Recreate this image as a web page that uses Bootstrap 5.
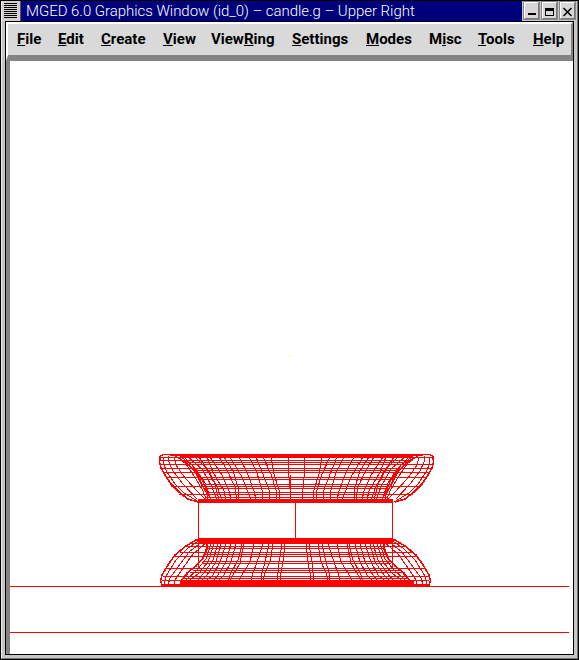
<!DOCTYPE html>
<html lang="en">
<head>
<meta charset="utf-8">
<title>MGED 6.0 Graphics Window</title>
<link href="https://cdn.jsdelivr.net/npm/bootstrap@5.3.0/dist/css/bootstrap.min.css" rel="stylesheet">
<style>
body{width:579px;height:660px;overflow:hidden;background:#000;font-family:Roboto,"Liberation Sans",sans-serif}
.mged{width:579px;height:660px;padding:1px;background:#000}
.frame{background:#c9c5c5;border-left:1px solid #eee;border-right:1px solid #777;border-bottom:1px solid #777;padding:0 3px 3px 3px}
.titlebar{height:20px;margin:0 -3px 0 -3px;background:#00007c}
.sysmenu{width:19px;height:20px;background:#d4d0d0;border-right:1px solid #555}
.caption-text{color:#fff;font-weight:300;font-size:15px;letter-spacing:-.04px;line-height:20px;height:20px;padding-left:5px;white-space:pre}
.winbtns{background:#c9c5c5;gap:3px;padding:1px 1px 0 2px;width:55px}
.winbtn{width:15px;height:17px;background:#d9d6d6;border:1px solid;border-color:#fff #777 #777 #fff;outline:1px solid #888}
.client{border:1px solid #000;background:#fff}
.menubar{height:39px;background:#d9d9d9;border:2px solid;border-color:#fff #838383 #838383 #fff;border-bottom-width:6px;padding-left:9px;color:#000;font-weight:700;font-size:15px;line-height:31px}
.menubar a{color:#000;text-decoration:none;white-space:nowrap;flex:none}
.menubar u{text-decoration:underline;text-decoration-thickness:1px;text-underline-offset:1px;text-decoration-skip-ink:none}
.drawing{border-left:4px solid #838383}
.wire{fill:none;stroke:#f00;stroke-width:1}
</style>
<script src="https://cdn.jsdelivr.net/npm/bootstrap@5.3.0/dist/js/bootstrap.bundle.min.js"></script>
</head>
<body class="m-0">
<div class="mged">
<div class="frame d-flex flex-column h-100">
  <header class="titlebar d-flex flex-shrink-0">
    <div class="sysmenu flex-shrink-0"><svg class="d-block" width="18" height="20" shape-rendering="crispEdges"><path d="M2 2.5h13M2 4.5h13M2 6.5h13M2 8.5h13M2 10.5h13M2 12.5h13M2 14.5h13M2 16.5h13" stroke="#000"/></svg></div>
    <div class="caption-text flex-grow-1">MGED 6.0 Graphics Window (id_0) – candle.g – Upper Right</div>
    <div class="winbtns d-flex flex-shrink-0">
      <div class="winbtn"><svg class="d-block" width="13" height="15" shape-rendering="crispEdges"><path d="M3 10h8v2H3z"/></svg></div>
      <div class="winbtn"><svg class="d-block" width="13" height="15" shape-rendering="crispEdges"><path d="M2 5h9v8H2zM3 8v4h7V8z" fill-rule="evenodd"/></svg></div>
      <div class="winbtn"><svg class="d-block" width="13" height="15"><path d="M2.500 5l8 8M10.500 5l-8 8" stroke="#000" stroke-width="1.500"/></svg></div>
    </div>
  </header>
  <main class="client flex-grow-1 d-flex flex-column">
    <nav class="menubar d-flex flex-shrink-0">
      <a style="width:41px"><u>F</u>ile</a><a style="width:43px"><u>E</u>dit</a><a style="width:62px"><u>C</u>reate</a><a style="width:48px"><u>V</u>iew</a><a style="width:81px">View<u>R</u>ing</a><a style="width:74px"><u>S</u>ettings</a><a style="width:63px"><u>M</u>odes</a><a style="width:49px">M<u>i</u>sc</a><a style="width:55px"><u>T</u>ools</a><a><u>H</u>elp</a>
    </nav>
    <div class="drawing flex-grow-1">
      <svg class="d-block" width="563" height="593" viewBox="10 61 563 593" shape-rendering="crispEdges">
        <path fill="#ee0" d="M289 355h1v1h-1z"/>
        <g class="wire">
          <path d="M10 586.500H569M10 632.500H569M198.500 502V568M392.500 502V568M295.500 502V540M290.500 475V500"/>
          <!-- upper ring -->
          <path stroke-width="4" d="M180 456H413M198 501H393"/>
          <path d="M163 454.500H431M160 457.500H433M160 460.500H180M180 460.500H413M185 462.500H408M160 464.500H433M162 468.500H431M193 470.500H400M163 472.500H429M166 477.500H427M200 479.500H393M171 486.500H421M204 484.500H390M206 488.500H388M179 494.500H413M206 492.500H388M206 497.500H388"/>
          <g id="upperHalf">
            <path stroke-width="1.600" d="M180 455L163 454.500L160 456.500L159.500 462L161 468L165 475L171 484L179 492L188 499L198 502"/>
            <path d="M164 457L163 463L167 472L175 484L184 493L199 502M169 456L168 460L173 471L183 484L197 499M174 457L176 465L185 478L199 493L205 499M176 456L186 464L196 479L203 491L206 499"/>
            <path stroke-width="1.500" d="M175 456L187 463L196 473L202 485L208 495L207 500"/>
            <path d="M181 457L192 465L202 480L211 500M184 457L196 469L205 483L211 500M188 457L202 469L212 487L217 500M195 457L206 468L215 484L219 500M199 457L210 473L218 489L222 500M207 457L213 472L224 491L226 500M210 457L222 475L229 491L231 500M219 457L227 470L235 487L237 500M224 457L233 471L238 487L239 500M230 457L242 477L251 500M239 457L247 472L254 491L256 500M249 457L257 473L262 490L263 500M256 457L263 474L269 490L270 500M263 457L271 474L276 490L277 500M271 457L274 474L279 490L280 500M288 457L289 478L291 500"/>
          </g>
          <use href="#upperHalf" transform="matrix(-1 0 0 1 593 0)"/>
          <!-- lower ring -->
          <path stroke-width="6" d="M199 541H392M180 583H414"/>
          <path d="M190 543.500H402M186 546.500H405M207 548.500H385M180 552.500H412M204 554.500H388M174 556.500H416M203 561.500H390M202 563.500H391M166 568.500H424M193 570.500H400M190 572.500H404M163 576.500H429M182 578.500H409M162 580.500H429M161 584.500H430"/>
          <g id="lowerHalf">
            <path stroke-width="1.600" d="M202 539L196 540L186 546L175 555L168 565L162 575L160.500 581L162 585L180 585"/>
            <path d="M200 540L188 548L176 560L166 576L164 585M203 541L189 552L178 567L170 578L168 585M206 543L193 554L183 568L175 580L174 585M207 547L201 561L190 571L182 580"/>
            <path stroke-width="1.500" d="M207 542L207 549L203 558L196 566L187 573L181 581"/>
            <path d="M211 544L206 559L197 570L186 580M214 544L208 562L199 573L190 580M218 544L213 560L204 573L198 580M221 544L216 562L207 575L202 580M226 544L220 562L213 575L207 580M231 544L226 562L218 575L214 580M236 544L231 562L224 575L219 580M242 544L238 560L231 573L228 580M244 544L240 563L233 575L230 580M254 544L250 562L243 573L239 580M263 544L257 562L253 573L251 580M269 544L265 562L262 573L261 580M273 544L270 562L265 573L263 580M282 544L279 562L278 573L277 580M285 544L283 562L281 573L280 580"/>
          </g>
          <use href="#lowerHalf" transform="matrix(-1 0 0 1 591 0)"/>
        </g>
      </svg>
    </div>
  </main>
</div>
</div>
</body>
</html>
